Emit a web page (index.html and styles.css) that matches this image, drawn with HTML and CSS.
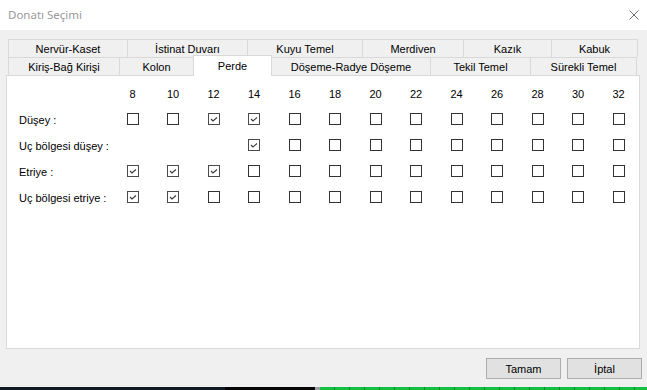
FILE: index.html
```html
<!DOCTYPE html>
<html lang="tr">
<head>
<meta charset="utf-8">
<title>Donatı Seçimi</title>
<link rel="stylesheet" href="styles.css">
</head>
<body>
<div class="window">
  <div class="titlebar">
    <span class="title">Donatı Seçimi</span>
    <svg class="close" width="10" height="10" viewBox="0 0 10 10"><path d="M0.5 0.5 L9.5 9.5 M9.5 0.5 L0.5 9.5" stroke="#6b6b6b" stroke-width="1" fill="none"/></svg>
  </div>
  <div class="body">
    <div class="tabs">
      <div class="tab-row">
        <div class="tab w119">Nervür-Kaset</div>
        <div class="tab w120">İstinat Duvarı</div>
        <div class="tab w115">Kuyu Temel</div>
        <div class="tab w101">Merdiven</div>
        <div class="tab w88">Kazık</div>
        <div class="tab w87 last">Kabuk</div>
      </div>
      <div class="tab-row">
        <div class="tab w111">Kiriş-Bağ Kirişi</div>
        <div class="tab w74">Kolon</div>
        <div class="tab w79 selected">Perde</div>
        <div class="tab w159">Döşeme-Radye Döşeme</div>
        <div class="tab w100">Tekil Temel</div>
        <div class="tab w107 last">Sürekli Temel</div>
      </div>
    </div>
    <div class="panel">
      <div class="grid">
        <span></span>
        <span class="num">8</span><span class="num">10</span><span class="num">12</span><span class="num">14</span><span class="num">16</span><span class="num">18</span><span class="num">20</span><span class="num">22</span><span class="num">24</span><span class="num">26</span><span class="num">28</span><span class="num">30</span><span class="num">32</span>

        <span class="label">Düşey :</span>
        <span class="cell"><i class="cb"></i></span>
        <span class="cell"><i class="cb"></i></span>
        <span class="cell"><i class="cb on"><svg viewBox="0 0 10 10"><path d="M2 5 L4 7 L8 3.5" /></svg></i></span>
        <span class="cell"><i class="cb on"><svg viewBox="0 0 10 10"><path d="M2 5 L4 7 L8 3.5" /></svg></i></span>
        <span class="cell"><i class="cb"></i></span>
        <span class="cell"><i class="cb"></i></span>
        <span class="cell"><i class="cb"></i></span>
        <span class="cell"><i class="cb"></i></span>
        <span class="cell"><i class="cb"></i></span>
        <span class="cell"><i class="cb"></i></span>
        <span class="cell"><i class="cb"></i></span>
        <span class="cell"><i class="cb"></i></span>
        <span class="cell"><i class="cb"></i></span>

        <span class="label">Uç bölgesi düşey :</span>
        <span class="cell"></span>
        <span class="cell"></span>
        <span class="cell"></span>
        <span class="cell"><i class="cb on"><svg viewBox="0 0 10 10"><path d="M2 5 L4 7 L8 3.5" /></svg></i></span>
        <span class="cell"><i class="cb"></i></span>
        <span class="cell"><i class="cb"></i></span>
        <span class="cell"><i class="cb"></i></span>
        <span class="cell"><i class="cb"></i></span>
        <span class="cell"><i class="cb"></i></span>
        <span class="cell"><i class="cb"></i></span>
        <span class="cell"><i class="cb"></i></span>
        <span class="cell"><i class="cb"></i></span>
        <span class="cell"><i class="cb"></i></span>

        <span class="label">Etriye :</span>
        <span class="cell"><i class="cb on"><svg viewBox="0 0 10 10"><path d="M2 5 L4 7 L8 3.5" /></svg></i></span>
        <span class="cell"><i class="cb on"><svg viewBox="0 0 10 10"><path d="M2 5 L4 7 L8 3.5" /></svg></i></span>
        <span class="cell"><i class="cb on"><svg viewBox="0 0 10 10"><path d="M2 5 L4 7 L8 3.5" /></svg></i></span>
        <span class="cell"><i class="cb"></i></span>
        <span class="cell"><i class="cb"></i></span>
        <span class="cell"><i class="cb"></i></span>
        <span class="cell"><i class="cb"></i></span>
        <span class="cell"><i class="cb"></i></span>
        <span class="cell"><i class="cb"></i></span>
        <span class="cell"><i class="cb"></i></span>
        <span class="cell"><i class="cb"></i></span>
        <span class="cell"><i class="cb"></i></span>
        <span class="cell"><i class="cb"></i></span>

        <span class="label">Uç bölgesi etriye :</span>
        <span class="cell"><i class="cb on"><svg viewBox="0 0 10 10"><path d="M2 5 L4 7 L8 3.5" /></svg></i></span>
        <span class="cell"><i class="cb on"><svg viewBox="0 0 10 10"><path d="M2 5 L4 7 L8 3.5" /></svg></i></span>
        <span class="cell"><i class="cb"></i></span>
        <span class="cell"><i class="cb"></i></span>
        <span class="cell"><i class="cb"></i></span>
        <span class="cell"><i class="cb"></i></span>
        <span class="cell"><i class="cb"></i></span>
        <span class="cell"><i class="cb"></i></span>
        <span class="cell"><i class="cb"></i></span>
        <span class="cell"><i class="cb"></i></span>
        <span class="cell"><i class="cb"></i></span>
        <span class="cell"><i class="cb"></i></span>
        <span class="cell"><i class="cb"></i></span>
      </div>
    </div>
    <div class="footer">
      <button class="btn">Tamam</button>
      <button class="btn">İptal</button>
    </div>
  </div>
</div>
<div class="desktop">
  <div class="seg navy"></div>
  <div class="seg black"></div>
  <div class="seg grey"></div>
  <div class="seg green"></div>
</div>
</body>
</html>
```

FILE: styles.css
```css
* { box-sizing: border-box; }
html, body {
  margin: 0;
  padding: 0;
  width: 647px;
  height: 390px;
  overflow: hidden;
  background: #f0f0f0;
  font-family: "Liberation Sans", Arial, sans-serif;
  font-size: 11px;
  color: #000;
}
.window {
  height: 387px;
  display: flex;
  flex-direction: column;
  background: #f0f0f0;
}
.titlebar {
  height: 30px;
  flex: none;
  background: #fff;
  display: flex;
  align-items: center;
  justify-content: space-between;
  padding: 0 8px 1px 8px;
}
.title {
  font-family: "Noto Sans", "Open Sans", sans-serif;
  font-size: 11.5px;
  color: #999;
}
.close { display: block; }
.body {
  flex: 1;
  padding: 9px 5px 0 6px;
  display: flex;
  flex-direction: column;
}
.tabs {
  margin-left: 2px;
  width: 630px;
}
.tab-row {
  display: flex;
  height: 18px;
}
.tab {
  flex: none;
  height: 18px;
  border-top: 1px solid #d9d9d9;
  border-left: 1px solid #d9d9d9;
  background: #f0f0f0;
  display: flex;
  align-items: center;
  justify-content: center;
  white-space: nowrap;
  padding-top: 1px;
}
.tab.last { border-right: 1px solid #d9d9d9; }
.tab.selected {
  position: relative;
  z-index: 1;
  margin-top: -2px;
  height: 21px;
  background: #fff;
  border-right: 1px solid #d9d9d9;
  margin-right: -1px;
  padding-top: 0;
  padding-bottom: 0;
}
.w119 { width: 119px; }
.w120 { width: 120px; }
.w115 { width: 115px; }
.w101 { width: 101px; }
.w88 { width: 88px; }
.w87 { width: 87px; }
.w111 { width: 111px; }
.w74 { width: 74px; }
.w79 { width: 79px; }
.w159 { width: 159px; }
.w100 { width: 100px; }
.w107 { width: 107px; }

.panel {
  width: 634px;
  height: 274px;
  background: #fff;
  border: 1px solid #d9d9d9;
  padding: 7px 0 0 12px;
}
.grid {
  display: grid;
  grid-template-columns: 93.25px repeat(13, 40.5px);
  grid-template-rows: 23px repeat(4, 26px);
  align-items: center;
}
.num { text-align: center; padding-bottom: 1px; }
.label { white-space: nowrap; padding-top: 2px; }
.cell {
  display: flex;
  justify-content: center;
  align-items: center;
}
.cb {
  display: block;
  width: 12px;
  height: 12px;
  border: 1px solid #333;
  background: #fff;
}
.cb.on { border-color: #4a4a4a; }
.cb svg {
  display: block;
  width: 10px;
  height: 10px;
}
.cb svg path {
  stroke: #3a3a3a;
  stroke-width: 1.1;
  fill: none;
}
.footer {
  display: flex;
  justify-content: flex-end;
  gap: 6px;
  padding: 9px 0 0 0;
}
.btn {
  width: 75px;
  height: 21px;
  background: #e1e1e1;
  border: 1px solid #adadad;
  font-family: "Liberation Sans", Arial, sans-serif;
  font-size: 11px;
  color: #000;
  padding: 0;
  margin: 0;
}
.desktop {
  height: 3px;
  display: flex;
}
.seg { height: 3px; flex: none; }
.navy { width: 225px; background: #111a22; }
.black { width: 90px; background: #050505; }
.grey { width: 5px; background: #9aa0a6; }
.green {
  flex: 1;
  background: repeating-linear-gradient(90deg, #12c043 0 14px, #0a8a2e 14px 15px);
}
```
